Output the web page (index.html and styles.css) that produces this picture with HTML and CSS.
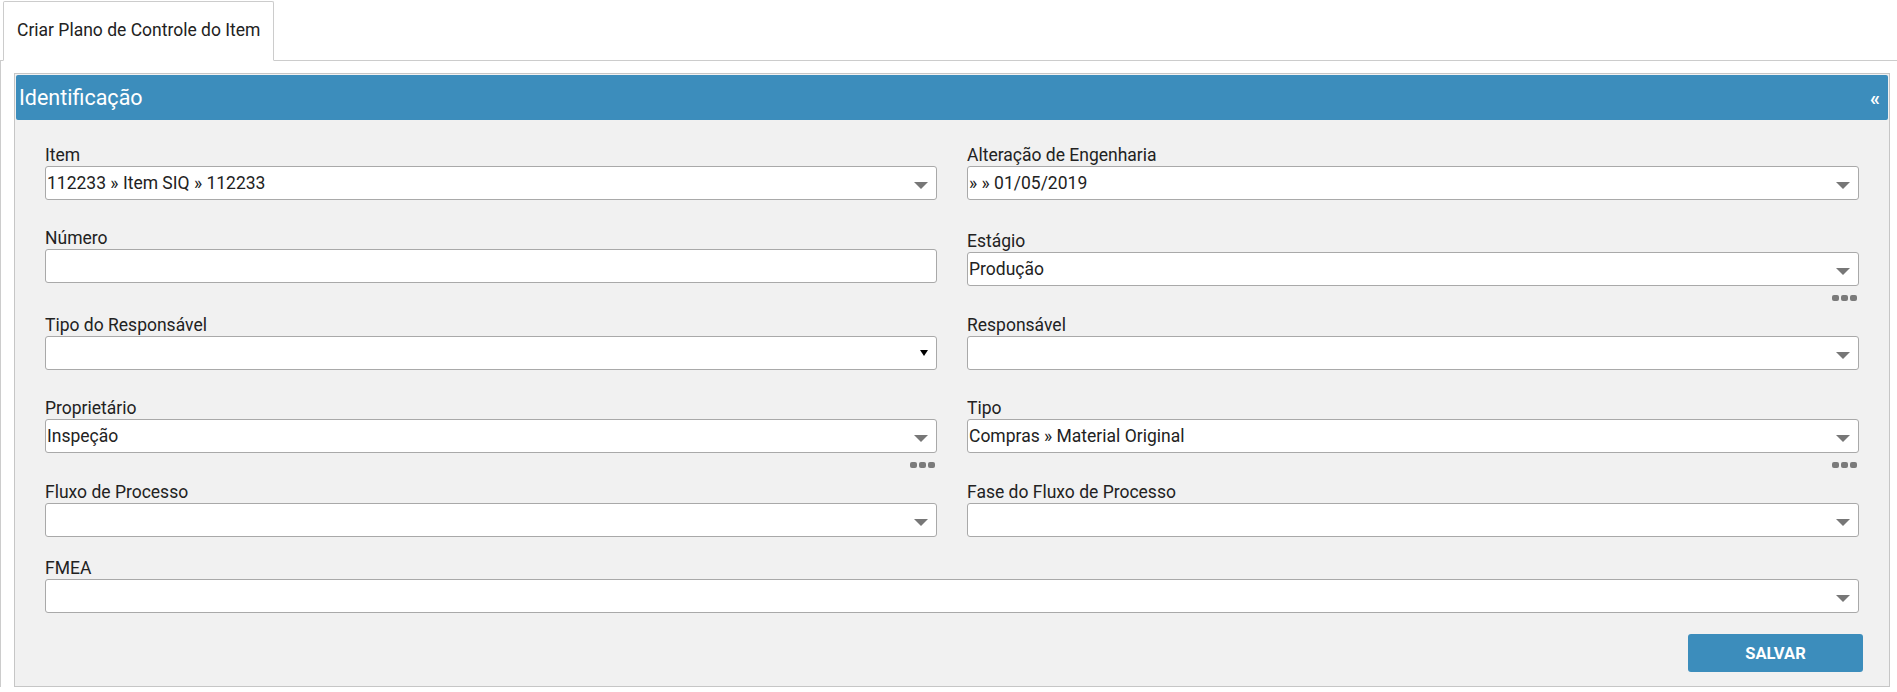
FILE: index.html
```html
<!DOCTYPE html>
<html lang="pt-BR">
<head>
    <meta charset="UTF-8">
    <meta name="viewport" content="width=device-width, initial-scale=1.0">
    <title>Criar Plano de Controle do Item</title>
    <link rel="stylesheet" href="styles.css">
</head>
<body>

<!-- Abas -->
<ul class="nav-tabs">
    <li class="active"><a href="#">Criar Plano de Controle do Item</a></li>
</ul>

<div class="tab-content">
    <div class="box">
        <div class="box-header">
            <h3>Identificação</h3>
            <button type="button" class="collapse-btn">&laquo;</button>
        </div>

        <form class="box-body">
            <div class="form-row">
                <div class="form-group">
                    <label>Item</label>
                    <div class="select">112233 » Item SIQ » 112233</div>
                </div>
                <div class="form-group">
                    <label>Alteração de Engenharia</label>
                    <div class="select">» » 01/05/2019</div>
                </div>
            </div>

            <div class="form-row has-more">
                <div class="form-group">
                    <label>Número</label>
                    <input type="text" class="text-input">
                </div>
                <div class="form-group shifted">
                    <label>Estágio</label>
                    <div class="select">Produção</div>
                    <div class="more"><span></span><span></span><span></span></div>
                </div>
            </div>

            <div class="form-row">
                <div class="form-group">
                    <label>Tipo do Responsável</label>
                    <div class="select native"></div>
                </div>
                <div class="form-group">
                    <label>Responsável</label>
                    <div class="select"></div>
                </div>
            </div>

            <div class="form-row has-more">
                <div class="form-group">
                    <label>Proprietário</label>
                    <div class="select">Inspeção</div>
                    <div class="more"><span></span><span></span><span></span></div>
                </div>
                <div class="form-group">
                    <label>Tipo</label>
                    <div class="select">Compras » Material Original</div>
                    <div class="more"><span></span><span></span><span></span></div>
                </div>
            </div>

            <div class="form-row last">
                <div class="form-group">
                    <label>Fluxo de Processo</label>
                    <div class="select"></div>
                </div>
                <div class="form-group">
                    <label>Fase do Fluxo de Processo</label>
                    <div class="select"></div>
                </div>
            </div>

            <div class="form-group full">
                <label>FMEA</label>
                <div class="select"></div>
            </div>

            <div class="form-actions">
                <button type="button" class="btn-save">SALVAR</button>
            </div>
        </form>
    </div>
</div>

</body>
</html>
```

FILE: styles.css
```css
/* Geral */
body {
    margin: 0;
    font-family: Roboto, "Liberation Sans", sans-serif;
    font-size: 17.5px;
    color: #222;
    background: #fff;
}

/* Abas */
.nav-tabs {
    list-style: none;
    margin: 0;
    padding: 1px 0 0 3px;
    display: flex;
    border-bottom: 1px solid #ccc;
}

.nav-tabs li {
    margin-bottom: -1px;
}

.nav-tabs li a {
    display: block;
    padding: 18px 13px 19px;
    line-height: 21px;
    color: #222;
    text-decoration: none;
    background: #fff;
    border: 1px solid #ccc;
    border-bottom-color: #fff;
    border-radius: 2px 2px 0 0;
}

.tab-content {
    border-left: 1px solid #ccc;
    padding: 12px 7px 0 13px;
}

/* Caixa */
.box {
    border: 1px solid #c6c6c6;
    padding: 1px;
    background: #f1f1f1;
}

.box-header {
    height: 45px;
    display: flex;
    align-items: center;
    justify-content: space-between;
    padding: 0 8px 0 3px;
    background: #3c8dbc;
    color: #fff;
    border-radius: 2px;
}

.box-header h3 {
    margin: 0;
    font-size: 21.5px;
    font-weight: normal;
}

.collapse-btn {
    border: none;
    background: none;
    padding: 0;
    color: #fff;
    font-family: inherit;
    font-size: 20px;
    font-weight: bold;
    line-height: 1;
    cursor: pointer;
}

.box-body {
    padding: 25px 29px 13px;
}

/* Campos */
.form-row {
    display: flex;
    gap: 30px;
    margin-bottom: 28px;
}

.form-row.has-more {
    margin-bottom: 14px;
}

.form-row.last {
    margin-bottom: 21px;
}

.form-group {
    flex: 1;
    min-width: 0;
}

.form-group.shifted {
    margin-top: 3px;
}

.form-group label {
    display: block;
    line-height: 21px;
}

.text-input,
.select {
    box-sizing: border-box;
    width: 100%;
    height: 34px;
    margin: 0;
    border: 1px solid #a9a9a9;
    border-radius: 3px;
    background: #fff;
    font-family: inherit;
    font-size: 17.5px;
    color: #222;
}

.select {
    position: relative;
    padding: 0 30px 0 1px;
    line-height: 32px;
    white-space: nowrap;
    overflow: hidden;
}

/* seta do select */
.select::after {
    content: "";
    position: absolute;
    right: 8px;
    top: 15px;
    border-style: solid;
    border-width: 7px 7px 0;
    border-color: #777 transparent transparent;
}

.select.native::after {
    top: 13px;
    border-width: 6px 4px 0;
    border-color: #000 transparent transparent;
}

/* botão de mais opções */
.more {
    display: flex;
    justify-content: flex-end;
    gap: 2px;
    margin-top: 9px;
    padding-right: 2px;
}

.more span {
    width: 7px;
    height: 6px;
    border-radius: 2px;
    background: #7b7b7b;
}

.form-group.full {
    margin-bottom: 21px;
}

.form-actions {
    display: flex;
    justify-content: flex-end;
    margin-right: -4px;
}

.btn-save {
    width: 175px;
    height: 38px;
    border: none;
    border-radius: 3px;
    background: #3c8dbc;
    color: #fff;
    font-family: inherit;
    font-size: 16.5px;
    font-weight: bold;
    cursor: pointer;
}
```
